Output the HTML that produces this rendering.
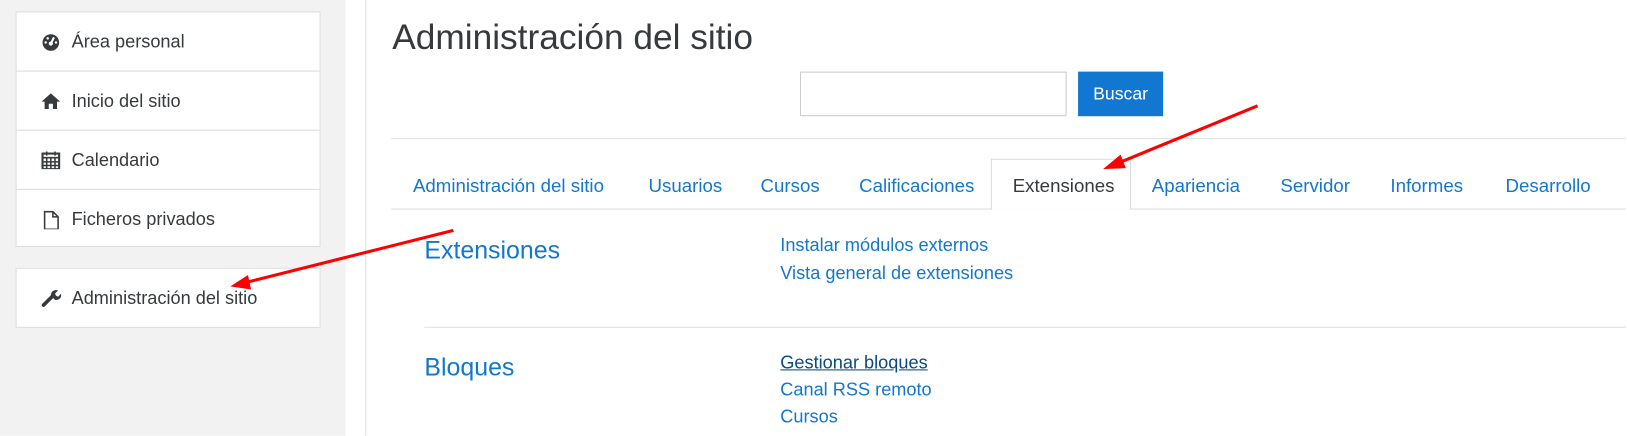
<!DOCTYPE html>
<html><head><meta charset="utf-8"><style>
*{margin:0;padding:0;box-sizing:border-box}
body{width:1627px;height:423px;overflow:hidden;background:#fff;font-family:"Liberation Sans",sans-serif;position:relative;color:#373a3c}
#w{position:absolute;left:0;top:0;width:1568px;height:408px;transform:scale(1.0376);transform-origin:0 0}
.abs{position:absolute;white-space:nowrap}
.side{position:absolute;left:0;top:0;width:333px;height:420px;background:#f2f2f2}
.box{position:absolute;left:15px;width:294px;background:#fff;border:1px solid #dcdcdc}
.row{height:57px;border-bottom:1px solid #dcdcdc;display:flex;align-items:center;padding-left:23px;font-size:17.5px;color:#373a3c}
.row:last-child{border-bottom:none}
.ic{width:20px;height:18px;margin-right:10px;display:inline-block}
.tab{position:absolute;top:169px;font-size:18px;color:#1177d1}
.lk{position:absolute;left:752px;font-size:17.5px;color:#1177d1}
.h{position:absolute;left:409px;font-size:24px;color:#1177d1;font-weight:300}
</style></head><body><div id="w">
<div class="side"></div>
<div class="abs" style="left:352px;top:0;width:1px;height:420px;background:#dedede"></div>
<div class="box" style="top:11px;height:227px">
<div class="row"><svg class="ic" viewBox="0 0 20 18"><circle cx="10" cy="10" r="8" fill="#373a3c"/><circle cx="10" cy="11" r="2" fill="#fff"/><path d="M10 11L13 5" stroke="#fff" stroke-width="2"/><circle cx="5" cy="10" r="1.2" fill="#fff"/><circle cx="15" cy="10" r="1.2" fill="#fff"/><circle cx="7" cy="6" r="1.2" fill="#fff"/></svg>Área personal</div>
<div class="row"><svg class="ic" viewBox="0 0 20 18"><path d="M10 2L1 10h3v7h4v-5h4v5h4v-7h3z" fill="#373a3c"/></svg>Inicio del sitio</div>
<div class="row"><svg class="ic" viewBox="0 0 20 18"><rect x="2" y="3" width="16" height="15" fill="none" stroke="#373a3c" stroke-width="2"/><path d="M2 7h16M2 11h16M2 14.5h16M6 7v11M10 7v11M14 7v11M6 1v4M14 1v4" stroke="#373a3c" stroke-width="1.5"/></svg>Calendario</div>
<div class="row"><svg class="ic" viewBox="0 0 20 18"><path d="M4 1h8l5 5v12H4z" fill="none" stroke="#373a3c" stroke-width="1.5"/><path d="M12 1v5h5" fill="none" stroke="#373a3c" stroke-width="1.5"/></svg>Ficheros privados</div>
</div>
<div class="box" style="top:258px;height:58px">
<div class="row" style="height:56px"><svg class="ic" viewBox="0 0 20 18"><path d="M3 16L11 8" stroke="#373a3c" stroke-width="3.5" stroke-linecap="round"/><path d="M10 7a5 5 0 0 1 7-5l-3 3 1 2 2 1 3-3a5 5 0 0 1-6 6z" fill="#373a3c"/></svg>Administración del sitio</div>
</div>
<div class="abs" style="left:378px;top:17px;font-size:34px;color:#373a3c;font-weight:300">Administración del sitio</div>
<div class="abs" style="left:771px;top:69px;width:257px;height:43px;border:1px solid #ccc"></div>
<div class="abs" style="left:1039px;top:69px;width:82px;height:43px;background:#1177d1;color:#fff;font-size:17px;line-height:43px;text-align:center">Buscar</div>
<div class="abs" style="left:377px;top:133px;width:1190px;height:1px;background:#e2e2e2"></div>
<div class="abs" style="left:377px;top:201px;width:1190px;height:1px;background:#dcdcdc"></div>
<div class="abs" style="left:955px;top:153px;width:135px;height:49px;background:#fff;border:1px solid #dcdcdc;border-bottom:none"></div>
<div class="tab" style="left:398px">Administración del sitio</div>
<div class="tab" style="left:625px">Usuarios</div>
<div class="tab" style="left:733px">Cursos</div>
<div class="tab" style="left:828px">Calificaciones</div>
<div class="tab" style="left:976px;color:#373a3c">Extensiones</div>
<div class="tab" style="left:1110px">Apariencia</div>
<div class="tab" style="left:1234px">Servidor</div>
<div class="tab" style="left:1340px">Informes</div>
<div class="tab" style="left:1451px">Desarrollo</div>
<div class="h" style="top:228px">Extensiones</div>
<div class="lk" style="top:226px">Instalar módulos externos</div>
<div class="lk" style="top:253px">Vista general de extensiones</div>
<div class="abs" style="left:409px;top:315px;width:1158px;height:1px;background:#e2e2e2"></div>
<div class="h" style="top:341px">Bloques</div>
<div class="lk" style="top:339px;color:#0a4a7f;text-decoration:underline">Gestionar bloques</div>
<div class="lk" style="top:365px">Canal RSS remoto</div>
<div class="lk" style="top:391px">Cursos</div>
<svg class="abs" style="left:0;top:0" width="1568" height="408">
<path d="M1212 102L1078 157" stroke="#f00" stroke-width="3"/>
<path d="M1063 163L1080 149L1085 162z" fill="#f00"/>
<path d="M437 222L238 272" stroke="#f00" stroke-width="3"/>
<path d="M222 276L239 265L242 279z" fill="#f00"/>
</svg>
</div></body></html>
